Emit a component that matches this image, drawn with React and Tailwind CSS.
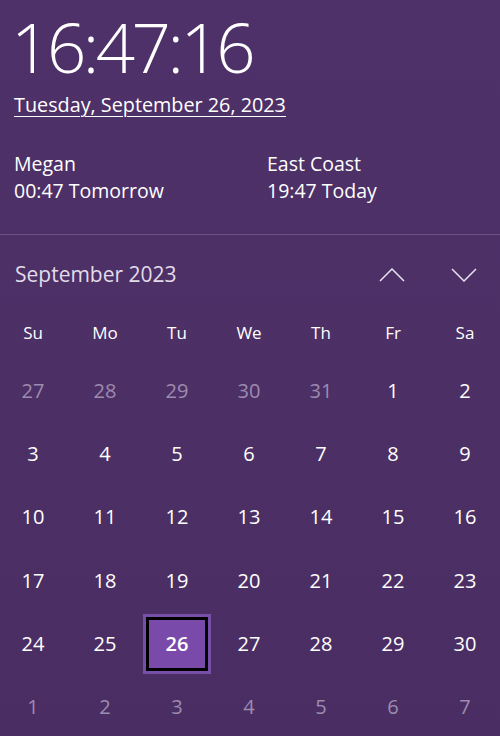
import React from 'react';

const font = { fontFamily: '"Open Sans", "Noto Sans", sans-serif' };

const weekdays = ['Su', 'Mo', 'Tu', 'We', 'Th', 'Fr', 'Sa'];

// 6 weeks shown, muted days belong to the neighbouring months
const days = [
  [27, true], [28, true], [29, true], [30, true], [31, true], [1], [2],
  [3], [4], [5], [6], [7], [8], [9],
  [10], [11], [12], [13], [14], [15], [16],
  [17], [18], [19], [20], [21], [22], [23],
  [24], [25], [26], [27], [28], [29], [30],
  [1, true], [2, true], [3, true], [4, true], [5, true], [6, true], [7, true],
];

function Chevron({ up }) {
  return (
    <svg width="26" height="14" viewBox="0 0 26 14" fill="none">
      <polyline
        points={up ? '1,13 13,1 25,13' : '1,1 13,13 25,1'}
        stroke="#e6e0ee"
        strokeWidth="1.5"
      />
    </svg>
  );
}

function DayCell({ n, muted, index }) {
  const today = index === 30;
  if (today) {
    return (
      <div className="flex h-[60px] items-center justify-center border-[3px] border-[#7650a8]">
        <div className="flex h-full w-full items-center justify-center border-[3px] border-black bg-[#7a4aaa] text-[20px] font-semibold text-white">
          {n}
        </div>
      </div>
    );
  }
  return (
    <div
      className={`flex h-[60px] items-center justify-center text-[20px] ${
        muted ? 'text-[#9d8cb0]' : 'text-white'
      }`}
    >
      {n}
    </div>
  );
}

export default function App() {
  return (
    <div
      style={font}
      className="h-[736px] w-[500px] overflow-hidden bg-gradient-to-b from-[#4e3168] to-[#4a2e63] text-white"
    >
      <div className="px-[14px] pt-[10px]">
        <div className="ml-[-3px] text-[69px] font-light leading-[72px] tracking-[-3.5px]">16:47:16</div>
        <div className="mt-[10px] text-[19.8px] leading-[26px] underline decoration-1 underline-offset-[4px]">
          Tuesday, September 26, 2023
        </div>
        <div className="mt-[32px] grid grid-cols-2 text-[19.5px] leading-[27px]">
          <div>
            <div>Megan</div>
            <div>00:47 Tomorrow</div>
          </div>
          <div className="pl-[17px]">
            <div>East Coast</div>
            <div>19:47 Today</div>
          </div>
        </div>
      </div>

      <div className="mt-[30px] h-px bg-[#6a5484]" />

      <div className="flex h-[80px] items-center pl-[15px]">
        <div className="flex-1 text-[21px] text-[#e2dce9]">September 2023</div>
        <div className="flex w-[144px] shrink-0">
          <div className="flex w-[72px] justify-center">
            <Chevron up />
          </div>
          <div className="flex w-[72px] justify-center">
            <Chevron />
          </div>
        </div>
      </div>

      <div className="ml-[-1px] grid grid-cols-[repeat(7,68px)] gap-x-1">
        {weekdays.map((d) => (
          <div key={d} className="flex h-[36px] items-center justify-center text-[17px]">
            {d}
          </div>
        ))}
      </div>

      <div className="ml-[-1px] mt-[10px] grid grid-cols-[repeat(7,68px)] gap-x-1 gap-y-[3.2px]">
        {days.map(([n, muted], i) => (
          <DayCell key={i} n={n} muted={muted} index={i} />
        ))}
      </div>
    </div>
  );
}
